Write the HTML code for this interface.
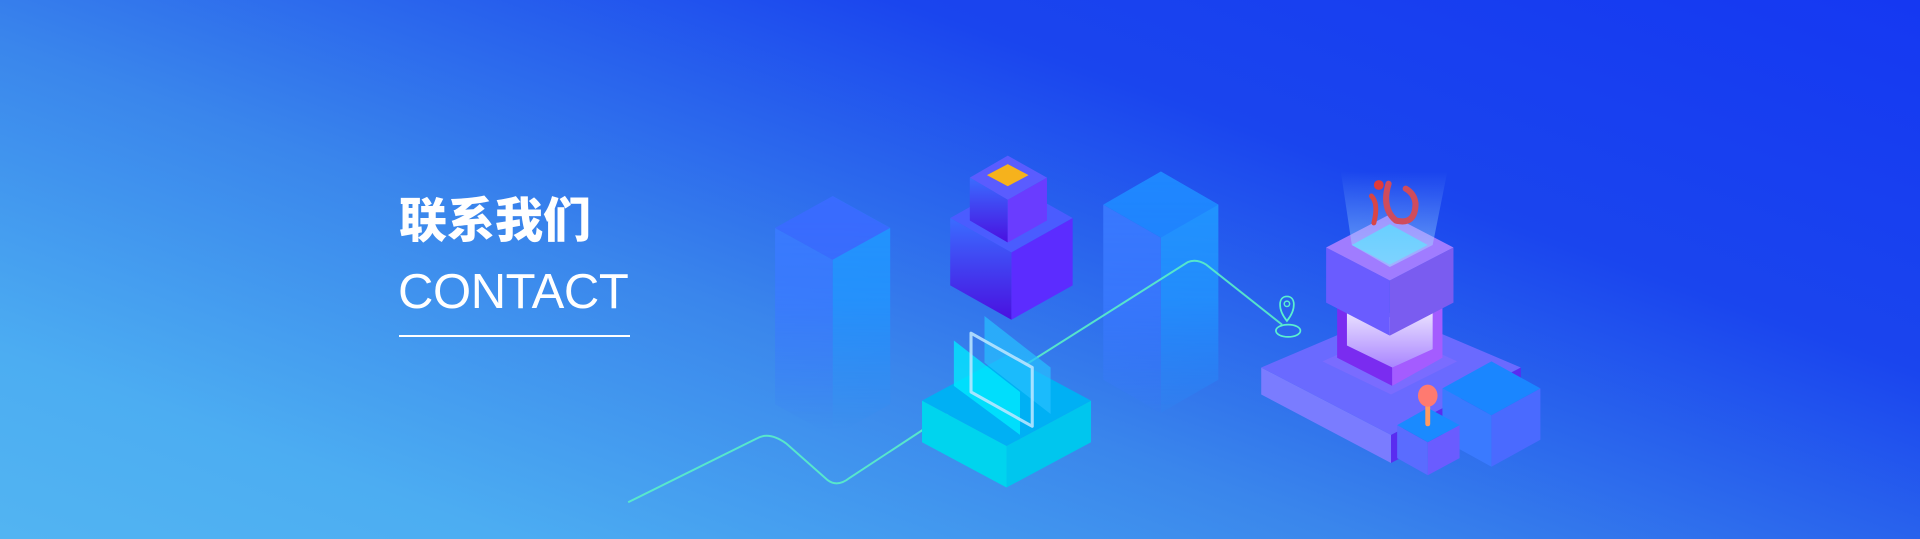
<!DOCTYPE html>
<html><head><meta charset="utf-8"><style>
html,body{margin:0;padding:0}
body{width:1920px;height:539px;overflow:hidden;position:relative;background:linear-gradient(200deg,#1538f2 0%,#1a45ee 30%,#3a86ec 60%,#4cadf2 85%,#52b4f2 100%)}
.t1{position:absolute;left:399px;top:181px;font:900 48px "Noto Sans CJK SC","WenQuanYi Zen Hei",sans-serif;color:#fff;letter-spacing:0px}
.t2{position:absolute;left:398px;top:264px;font:400 49px "Liberation Sans",sans-serif;color:#fff;letter-spacing:-0.4px}
.ln{position:absolute;left:399px;top:335px;width:231px;height:2px;background:#fff}
svg{position:absolute;left:0;top:0}
</style></head><body>
<svg width="1920" height="539" viewBox="0 0 1568 440" preserveAspectRatio="none">
<defs>
<linearGradient id="fade" x1="0" y1="0" x2="0" y2="1"><stop offset="0" stop-color="#fff" stop-opacity="1"/><stop offset="0.5" stop-color="#fff" stop-opacity="0.8"/><stop offset="1" stop-color="#fff" stop-opacity="0"/></linearGradient>
<mask id="m1"><rect x="600" y="140" width="420" height="210" fill="url(#fade)"/></mask>
<linearGradient id="pl" x1="0" y1="0" x2="0" y2="1"><stop offset="0" stop-color="#3a6cff"/><stop offset="1" stop-color="#4a10e0"/></linearGradient>
<linearGradient id="wh" x1="0" y1="0" x2="0" y2="1"><stop offset="0" stop-color="#fff"/><stop offset="1" stop-color="#a985ff"/></linearGradient>
<linearGradient id="beam" x1="0" y1="0" x2="0" y2="1"><stop offset="0" stop-color="#9fd8ff" stop-opacity="0"/><stop offset="1" stop-color="#9fd8ff" stop-opacity="0.6"/></linearGradient>
</defs>
<g mask="url(#m1)">
<polygon points="680,160 727,186 727,330 680,356" fill="#2196ff"/>
<polygon points="633,186 680,212 680,356 633,330" fill="#3a7aff"/>
<polygon points="680,160 727,186 680,212 633,186" fill="#3a6bff"/>
<polygon points="948,140 995,167 995,310 948,337" fill="#2196ff"/>
<polygon points="901,167 948,194 948,337 901,310" fill="#3a7aff"/>
<polygon points="948,140 995,167 948,194 901,167" fill="#1f88ff"/>
</g>
<polygon points="776,178 826,206 826,261 776,233" fill="url(#pl)"/>
<polygon points="826,206 876,178 876,233 826,261" fill="#5c2cff"/>
<polygon points="826,150 876,178 826,206 776,178" fill="#4a5cff"/>
<polygon points="792,145 823,163 823,198 792,180" fill="url(#pl)"/>
<polygon points="823,163 855,145 855,180 823,198" fill="#6a3cff"/>
<polygon points="823,127 855,145 823,163 792,145" fill="#5a5cff"/>
<polygon points="823,134 840,143 823,152 806,143" fill="#f6b21c"/>
<path d="M513,410 L618,358 Q628,352 642,362 L676,392 Q684,398 694,390 L755,350 L970,214 Q977,211 985,216 L1047,265" fill="none" stroke="#5af0c8" stroke-width="1.6" opacity="0.9"/>
<path d="M1051,262 C1043,252 1044,242 1051,242 C1058,242 1059,252 1051,262Z" fill="none" stroke="#5af0d0" stroke-width="1.4"/>
<circle cx="1051" cy="248" r="2.2" fill="none" stroke="#5af0d0" stroke-width="1.2"/>
<ellipse cx="1052" cy="270" rx="10" ry="5" fill="none" stroke="#5af0d0" stroke-width="1.4"/>
<polygon points="753,327 822,364 822,398 753,361" fill="#00d4ee"/>
<polygon points="822,364 891,327 891,361 822,398" fill="#00c6ee"/>
<polygon points="822,290 891,327 822,364 753,327" fill="#00b0f4"/>
<polygon points="804,258 858,300 858,338 804,296" fill="#26c0ff" opacity="0.7"/>
<polygon points="779,278 833,320 833,355 779,315" fill="#00eeff" opacity="0.75"/>
<polygon points="793,272 843,300 843,348 793,320" fill="none" stroke="#bfe8ff" stroke-width="2.5" stroke-linejoin="round" opacity="0.85"/>
<polygon points="1030,300 1136,355 1136,378 1030,322" fill="#7a7cff"/>
<polygon points="1136,355 1242,300 1242,322 1136,378" fill="#5a2cf0"/>
<polygon points="1136,255 1242,300 1136,355 1030,300" fill="#6a6aff"/>
<polygon points="1080,295 1136,322 1190,295 1136,270" fill="#7a6cff"/>
<polygon points="1092,245 1137,268 1137,315 1092,292" fill="#7a2cf0"/>
<polygon points="1137,268 1178,245 1178,292 1137,315" fill="#a45cff"/>
<polygon points="1100,240 1137,260 1170,240 1170,285 1137,300 1100,282" fill="url(#wh)"/>
<polygon points="1083,202 1135,229 1135,274 1083,247" fill="#6a5cff"/>
<polygon points="1135,229 1187,202 1187,247 1135,274" fill="#7a5cf0"/>
<polygon points="1135,175 1187,202 1135,229 1083,202" fill="#a07cff"/>
<polygon points="1135,183 1166,200 1135,216 1104,200" fill="#4ecbff"/>
<polygon points="1095,140 1182,140 1170,200 1135,218 1104,200" fill="url(#beam)"/>
<circle cx="1126" cy="151" r="4" fill="#e03a3a"/>
<path d="M1120,160 Q1126,166 1122,182" fill="none" stroke="#d94545" stroke-width="4" stroke-linecap="round"/>
<path d="M1134,150 Q1128,170 1140,180 Q1156,184 1156,166 Q1155,158 1148,154" fill="none" stroke="#d04c5c" stroke-width="5" stroke-linecap="round"/>
<polygon points="1178,317 1218,339 1218,381 1178,359" fill="#3a7aff"/>
<polygon points="1218,339 1258,317 1258,359 1218,381" fill="#4a6aff"/>
<polygon points="1218,295 1258,317 1218,339 1178,317" fill="#1a86ff"/>
<polygon points="1141,347 1166,361 1166,388 1141,374" fill="#5a6cff"/>
<polygon points="1166,361 1192,347 1192,374 1166,388" fill="#6a5cff"/>
<polygon points="1166,333 1192,347 1166,361 1141,347" fill="#1a8aff"/>
<rect x="1164" y="325" width="4" height="23" rx="2" fill="#ff9a60"/>
<ellipse cx="1166" cy="323" rx="8" ry="9" fill="#ff7a70"/>
</svg>
<div class="t1">联系我们</div>
<div class="t2">CONTACT</div>
<div class="ln"></div>
</body></html>
